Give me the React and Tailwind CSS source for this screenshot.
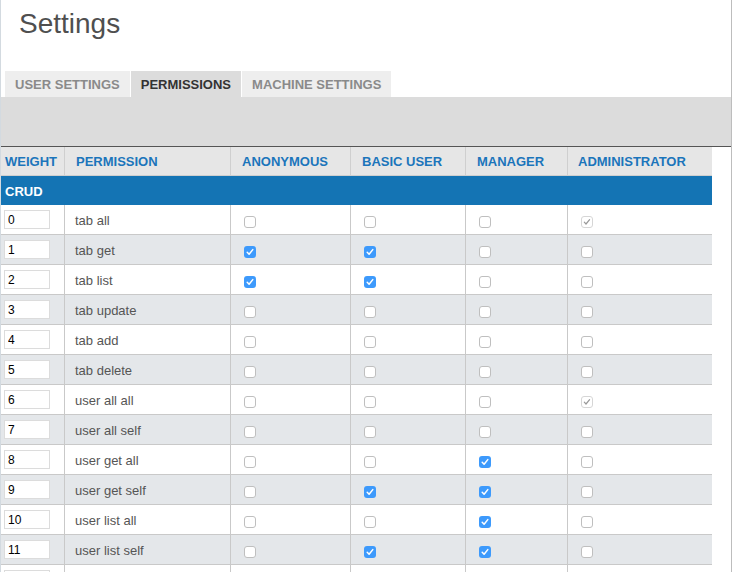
const roles = ["ANONYMOUS", "BASIC USER", "MANAGER", "ADMINISTRATOR"];

// 0 = off, 1 = on, 2 = locked on (greyed)
const rows = [
  ["tab all", [0, 0, 0, 2]],
  ["tab get", [1, 1, 0, 0]],
  ["tab list", [1, 1, 0, 0]],
  ["tab update", [0, 0, 0, 0]],
  ["tab add", [0, 0, 0, 0]],
  ["tab delete", [0, 0, 0, 0]],
  ["user all all", [0, 0, 0, 2]],
  ["user all self", [0, 0, 0, 0]],
  ["user get all", [0, 0, 1, 0]],
  ["user get self", [0, 1, 1, 0]],
  ["user list all", [0, 0, 1, 0]],
  ["user list self", [0, 1, 1, 0]],
  // scrolled out of view, only its top edge shows
  ["", [0, 0, 0, 0]],
];

const tabs = ["USER SETTINGS", "PERMISSIONS", "MACHINE SETTINGS"];

function Check({ state }) {
  if (state === 1) {
    return (
      <div className="mt-[4px] w-[12px] h-[12px] rounded-[3px] bg-[#3d9afc] flex items-center justify-center">
        <svg width="12" height="12" viewBox="0 0 12 12">
          <path d="M3.2 6.3 L5.1 8.3 L8.8 3.6" fill="none" stroke="#fff" strokeWidth="1.5" strokeLinecap="round" strokeLinejoin="round" />
        </svg>
      </div>
    );
  }
  if (state === 2) {
    return (
      <div className="mt-[4px] w-[12px] h-[12px] rounded-[3px] border border-[#d6d6d6] bg-white flex items-center justify-center">
        <svg width="10" height="10" viewBox="0 0 10 10">
          <path d="M2.3 5.2 L4 7 L7.6 2.6" fill="none" stroke="#999" strokeWidth="1.2" strokeLinecap="round" strokeLinejoin="round" />
        </svg>
      </div>
    );
  }
  return <div className="mt-[4px] w-[12px] h-[12px] rounded-[3px] border border-[#bfbfbf] bg-white" />;
}

export default function App() {
  const cols = "grid grid-cols-[64px_166px_120px_115px_102px_144px]";

  return (
    <div className="w-[733px] h-[572px] overflow-hidden bg-white font-['Liberation_Sans',Arial,sans-serif]">
      <div className="w-[732px] min-h-[572px] border-l border-r border-l-[#d3dae0] border-r-[#bdbdbd]">
        {/* Title */}
        <h1 className="pl-[18px] pt-[8px] text-[28px] leading-[32px] text-[#4f4f4f]">Settings</h1>

        {/* Tabs */}
        <div className="flex gap-[1px] pl-[4px] mt-[31px]">
          {tabs.map((t) => (
            <div
              key={t}
              className={`h-[26px] px-[10px] pt-[1px] flex items-center text-[13px] font-bold ${
                t === "PERMISSIONS" ? "bg-[#dcdcdc] text-[#333]" : "bg-[#eeeeee] text-[#8a8a8a]"
              }`}
            >
              {t}
            </div>
          ))}
        </div>
        <div className="h-[50px] bg-[#dcdcdc] border-b border-[#555]" />

        {/* Permissions table */}
        <div className="w-[711px]">
          <div className={`${cols} h-[29px] bg-[#e6e6e6] border-b border-[#cfcfcf] text-[13px] font-bold text-[#1b75bb]`}>
            <div className="pl-[4px] pt-[2px] flex items-center border-r border-[#cfcfcf]">WEIGHT</div>
            <div className="pl-[11px] pt-[2px] flex items-center border-r border-[#cfcfcf]">PERMISSION</div>
            {roles.map((r, i) => (
              <div key={r} className={`pt-[2px] flex items-center ${i === 3 ? "pl-[10px]" : "pl-[11px] border-r border-[#cfcfcf]"}`}>
                {r}
              </div>
            ))}
          </div>

          <div className="h-[29px] bg-[#1474b4] flex items-center pl-[4px] pt-[2px] text-[13px] font-bold text-white">CRUD</div>

          {rows.map(([name, perms], n) => (
            <div
              key={n}
              className={`${cols} h-[30px] border-b border-[#c9c9c9] ${n % 2 ? "bg-[#e4e7ea]" : "bg-white"}`}
            >
              <div className="pl-[3px] flex items-center border-r border-[#c9c9c9]">
                <input
                  readOnly
                  value={name ? n : ""}
                  className="w-[46px] h-[19px] border border-[#dcdcdc] bg-white pl-[3px] pt-[1px] text-[12px] text-black outline-none"
                />
              </div>
              <div className="pl-[10px] pt-[2px] flex items-center border-r border-[#c9c9c9] text-[13px] text-[#555]">{name}</div>
              {perms.map((p, i) => (
                <div key={i} className={`pl-[13px] flex items-center ${i === 3 ? "" : "border-r border-[#c9c9c9]"}`}>
                  <Check state={p} />
                </div>
              ))}
            </div>
          ))}
        </div>
      </div>
    </div>
  );
}
